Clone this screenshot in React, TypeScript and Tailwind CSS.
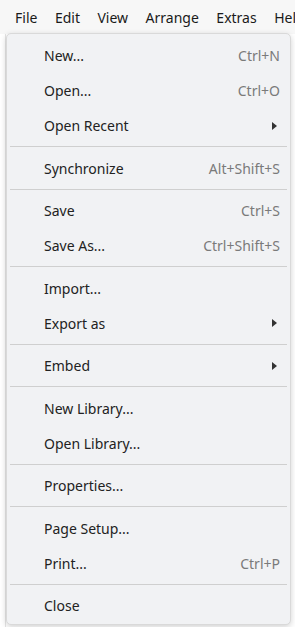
import React from 'react';

type Item =
  | { kind: 'item'; label: string; shortcut?: string; submenu?: boolean }
  | { kind: 'sep' };

const items: Item[] = [
  { kind: 'item', label: 'New...', shortcut: 'Ctrl+N' },
  { kind: 'item', label: 'Open...', shortcut: 'Ctrl+O' },
  { kind: 'item', label: 'Open Recent', submenu: true },
  { kind: 'sep' },
  { kind: 'item', label: 'Synchronize', shortcut: 'Alt+Shift+S' },
  { kind: 'sep' },
  { kind: 'item', label: 'Save', shortcut: 'Ctrl+S' },
  { kind: 'item', label: 'Save As...', shortcut: 'Ctrl+Shift+S' },
  { kind: 'sep' },
  { kind: 'item', label: 'Import...' },
  { kind: 'item', label: 'Export as', submenu: true },
  { kind: 'sep' },
  { kind: 'item', label: 'Embed', submenu: true },
  { kind: 'sep' },
  { kind: 'item', label: 'New Library...' },
  { kind: 'item', label: 'Open Library...' },
  { kind: 'sep' },
  { kind: 'item', label: 'Properties...' },
  { kind: 'sep' },
  { kind: 'item', label: 'Page Setup...' },
  { kind: 'item', label: 'Print...', shortcut: 'Ctrl+P' },
  { kind: 'sep' },
  { kind: 'item', label: 'Close' },
];

const menus = ['File', 'Edit', 'View', 'Arrange', 'Extras', 'Help'];

const Arrow = () => (
  <svg width="5" height="8" viewBox="0 0 5 8" className="mr-[3px]">
    <path d="M0 0 L5 4 L0 8 Z" fill="#333" />
  </svg>
);

export default function App() {
  return (
    <div className="relative w-[295px] h-[627px] overflow-hidden bg-[#fbfbfb] font-['Noto_Sans',sans-serif]">
      {/* menu bar */}
      <div className="flex h-[34px] items-center gap-[17.5px] pl-[15px] text-[14px] text-[#1a1a1a] bg-[#f7f7f7]">
        {menus.map((m) => (
          <span key={m} className="whitespace-nowrap">{m}</span>
        ))}
      </div>

      {/* page behind the menu */}
      <div className="flex h-[593px]">
        <div className="w-[6px] bg-white border-r border-[#e5e5e5]" />
        <div className="flex-1 bg-white" />
      </div>

      {/* dropdown */}
      <div className="absolute left-[6px] top-[33px] w-[285px] h-[592px] rounded-[5px] border border-[#d9d9d9] bg-[#f1f2f4] shadow-[0_2px_6px_rgba(0,0,0,0.18)] py-[4px] px-[3px] text-[14px]">
        {items.map((it, i) =>
          it.kind === 'sep' ? (
            <div key={i} className="h-[7.5px] flex items-center">
              <div className="h-px w-full bg-[#cfcfcf]" />
            </div>
          ) : (
            <div key={i} className="h-[35px] flex items-center justify-between pl-[34px] pr-[7px]">
              <span className="text-[#222]">{it.label}</span>
              {it.shortcut && <span className="text-[#7a7a7a]">{it.shortcut}</span>}
              {it.submenu && <Arrow />}
            </div>
          )
        )}
      </div>
    </div>
  );
}
